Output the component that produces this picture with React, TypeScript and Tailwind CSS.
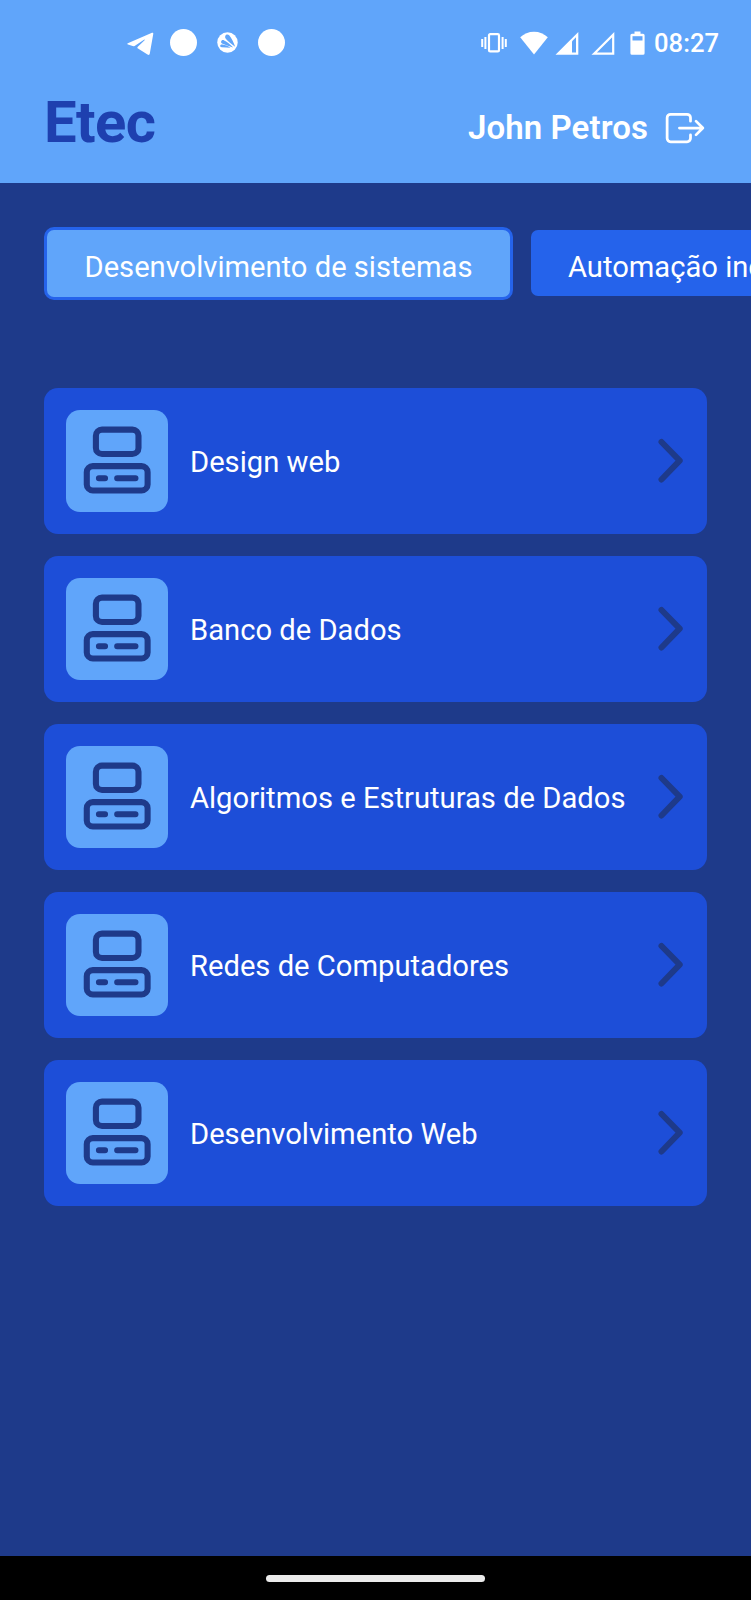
import React from 'react';

const courses = ['Desenvolvimento de sistemas', 'Automação industrial'];

const subjects = [
  'Design web',
  'Banco de Dados',
  'Algoritmos e Estruturas de Dados',
  'Redes de Computadores',
  'Desenvolvimento Web',
];

function StatusBar() {
  return (
    <div className="flex h-[85px] items-center justify-between pr-[32px] pl-[127px] text-white">
      <div className="flex items-center">
        <svg className="mt-[2px] h-[24px] w-[27px]" viewBox="0 0 27 24">
          <path
            d="M.8 11.200 25 .8c.8-.3 1.400.1 1.300 1L22.800 21.600c-.3 1.500-1.100 1.800-2.300 1L11 16.600c-.8-.5-.8-1.100-.2-1.800L17.600 8.200c.4-.5 0-.8-.6-.5L7.600 13.900c-.7.4-1.300.4-2 .2L1 12.500c-.8-.3-.9-.9-.2-1.300z"
            fill="currentColor"
          />
        </svg>
        <span className="ml-[16px] size-[27px] rounded-full bg-white" />
        <svg className="ml-[20px] size-[21px]" viewBox="0 0 22 22">
          <circle cx="11" cy="11" r="10.700" fill="currentColor" />
          <g fill="#60a5fa">
            <path d="M8.600 4.400C9 2.400 11.500 1.900 13 3.700c2.500 3 4.600 7.600 6 11.800C15.400 12.900 11.300 9.400 9.200 7c-.7-.9-.9-1.700-.6-2.600z" />
            <path d="M4.300 10.200c.2-1.600 1.700-2.100 3.200-1.400 3.300 1.600 6.800 4.200 9.500 7.400-3.700-1.400-7.600-2.600-11.200-4-1.100-.4-1.600-1-1.500-2z" />
            <path d="M3.300 14.500c.2-1.100 1.200-1.600 2.300-1.400 3 .4 6 1.600 8.600 3.400-3-.3-6-.4-9.200-.6-1.200-.1-1.800-.6-1.700-1.400z" />
          </g>
        </svg>
        <span className="ml-[20px] size-[27px] rounded-full bg-white" />
      </div>
      <div className="flex items-center">
        <svg className="h-[20px] w-[26px]" viewBox="0 0 26 20" fill="none" stroke="currentColor">
          <rect x="8" y="1.200" width="10" height="17.200" rx="1.200" strokeWidth="2.200" />
          <path d="M1.200 6v8M4.400 4v12M21.600 4v12M24.800 6v8" strokeWidth="2" />
        </svg>
        <svg className="ml-[13px] h-[24px] w-[28px]" viewBox="0 0 28 24" fill="currentColor">
          <path d="M.2 6.200C4 2.700 8.700.7 14 .7s10 2 13.800 5.500L14 23.500z" />
        </svg>
        <svg className="ml-[7px] h-[24px] w-[24px]" viewBox="0 0 24 24">
          <path d="M.5 23.800 23.300 1v22.800z" fill="currentColor" />
          <path d="M17 10.300 21 6.300V21.500h-4z" fill="#60a5fa" />
        </svg>
        <svg className="ml-[12px] h-[24px] w-[24px]" viewBox="0 0 24 24">
          <path d="M3.100 22.700 22.200 3.600v19.100z" fill="none" stroke="currentColor" strokeWidth="2.200" />
        </svg>
        <svg className="ml-[15px] h-[24px] w-[15px]" viewBox="0 0 15 24">
          <path
            d="M4.500 2.700V.6h6v2.100h2.500a1.600 1.600 0 0 1 1.600 1.600v17.900a1.600 1.600 0 0 1-1.600 1.600H2a1.600 1.600 0 0 1-1.600-1.600V4.300A1.600 1.600 0 0 1 2 2.700z"
            fill="currentColor"
          />
          <path d="M2.500 5.200h10v4.300h-10z" fill="#60a5fa" />
        </svg>
        <span className="mt-[3px] ml-[9px] text-[25.600px] leading-none font-medium">08:27</span>
      </div>
    </div>
  );
}

function ExitIcon() {
  return (
    <svg
      className="size-[44px]"
      viewBox="0 0 512 512"
      fill="none"
      stroke="currentColor"
      strokeWidth="32"
      strokeLinecap="round"
      strokeLinejoin="round"
    >
      <path d="M320 176v-40a40 40 0 0 0-40-40H88a40 40 0 0 0-40 40v240a40 40 0 0 0 40 40h192a40 40 0 0 0 40-40v-40" />
      <path d="m384 176 80 80-80 80M191 256h273" />
    </svg>
  );
}

function ComputerIcon() {
  return (
    <svg
      className="size-[73px]"
      viewBox="0.100 0.150 24 24"
      fill="none"
      stroke="currentColor"
      strokeWidth="2"
      strokeLinecap="round"
      strokeLinejoin="round"
    >
      <rect x="5" y="2" width="14" height="8" rx="2" />
      <rect x="2" y="14" width="20" height="8" rx="2" />
      <path d="M6 18h2M12 18h6" />
    </svg>
  );
}

function SubjectCard({ name }: { name: string }) {
  return (
    <button className="flex h-[146px] w-full items-center rounded-[14px] bg-[#1d4ed8] px-[22px] text-left">
      <span className="flex size-[102px] shrink-0 items-center justify-center rounded-[14px] bg-[#60a5fa] text-[#1e3a8a]">
        <ComputerIcon />
      </span>
      <span className="ml-[22px] flex-1 pt-[5px] text-[29.180px] whitespace-nowrap text-white">{name}</span>
      <svg
        className="mr-[2px] h-[46px] w-[26px] shrink-0 text-[#1e3a8a]"
        viewBox="0 0 26 46"
        fill="none"
        stroke="currentColor"
        strokeWidth="6"
        strokeLinecap="round"
        strokeLinejoin="round"
      >
        <path d="m4.500 4 18.200 18.700L4.500 41.500" />
      </svg>
    </button>
  );
}

export default function App() {
  return (
    <div className="flex h-[1600px] w-[751px] flex-col overflow-hidden bg-[#1e3a8a] font-['Roboto',sans-serif]">
      <header className="h-[183px] shrink-0 bg-[#60a5fa]">
        <StatusBar />
        <div className="flex h-[85px] items-center justify-between px-[44px]">
          <h1 className="-mt-[11px] text-[58px] leading-none font-bold tracking-[-0.600px] text-[#1e40af]">Etec</h1>
          <div className="flex items-center text-white">
            <span className="text-[33px] leading-none font-semibold tracking-[0.100px]">John Petros</span>
            <span className="ml-[15px]">
              <ExitIcon />
            </span>
          </div>
        </div>
      </header>

      <nav className="mt-[44px] flex h-[73px] shrink-0 items-start gap-[18px] overflow-hidden pl-[44px] text-[29.150px] whitespace-nowrap text-white">
        <button className="h-[73px] w-[469px] shrink-0 rounded-[10px] border-[3.600px] border-[#2563eb] bg-[#60a5fa] pt-[8px]">
          {courses[0]}
        </button>
        <button className="mt-[3px] h-[66px] shrink-0 rounded-[7px] bg-[#2563eb] px-[37px] pt-[9px]">{courses[1]}</button>
      </nav>

      <main className="mt-[87.500px] flex flex-1 flex-col gap-[22px] px-[44px]">
        {subjects.map((name) => (
          <SubjectCard key={name} name={name} />
        ))}
      </main>

      <footer className="flex h-[44px] shrink-0 items-center justify-center bg-black">
        <span className="h-[7px] w-[219px] rounded-full bg-[#ebebeb]" />
      </footer>
    </div>
  );
}
